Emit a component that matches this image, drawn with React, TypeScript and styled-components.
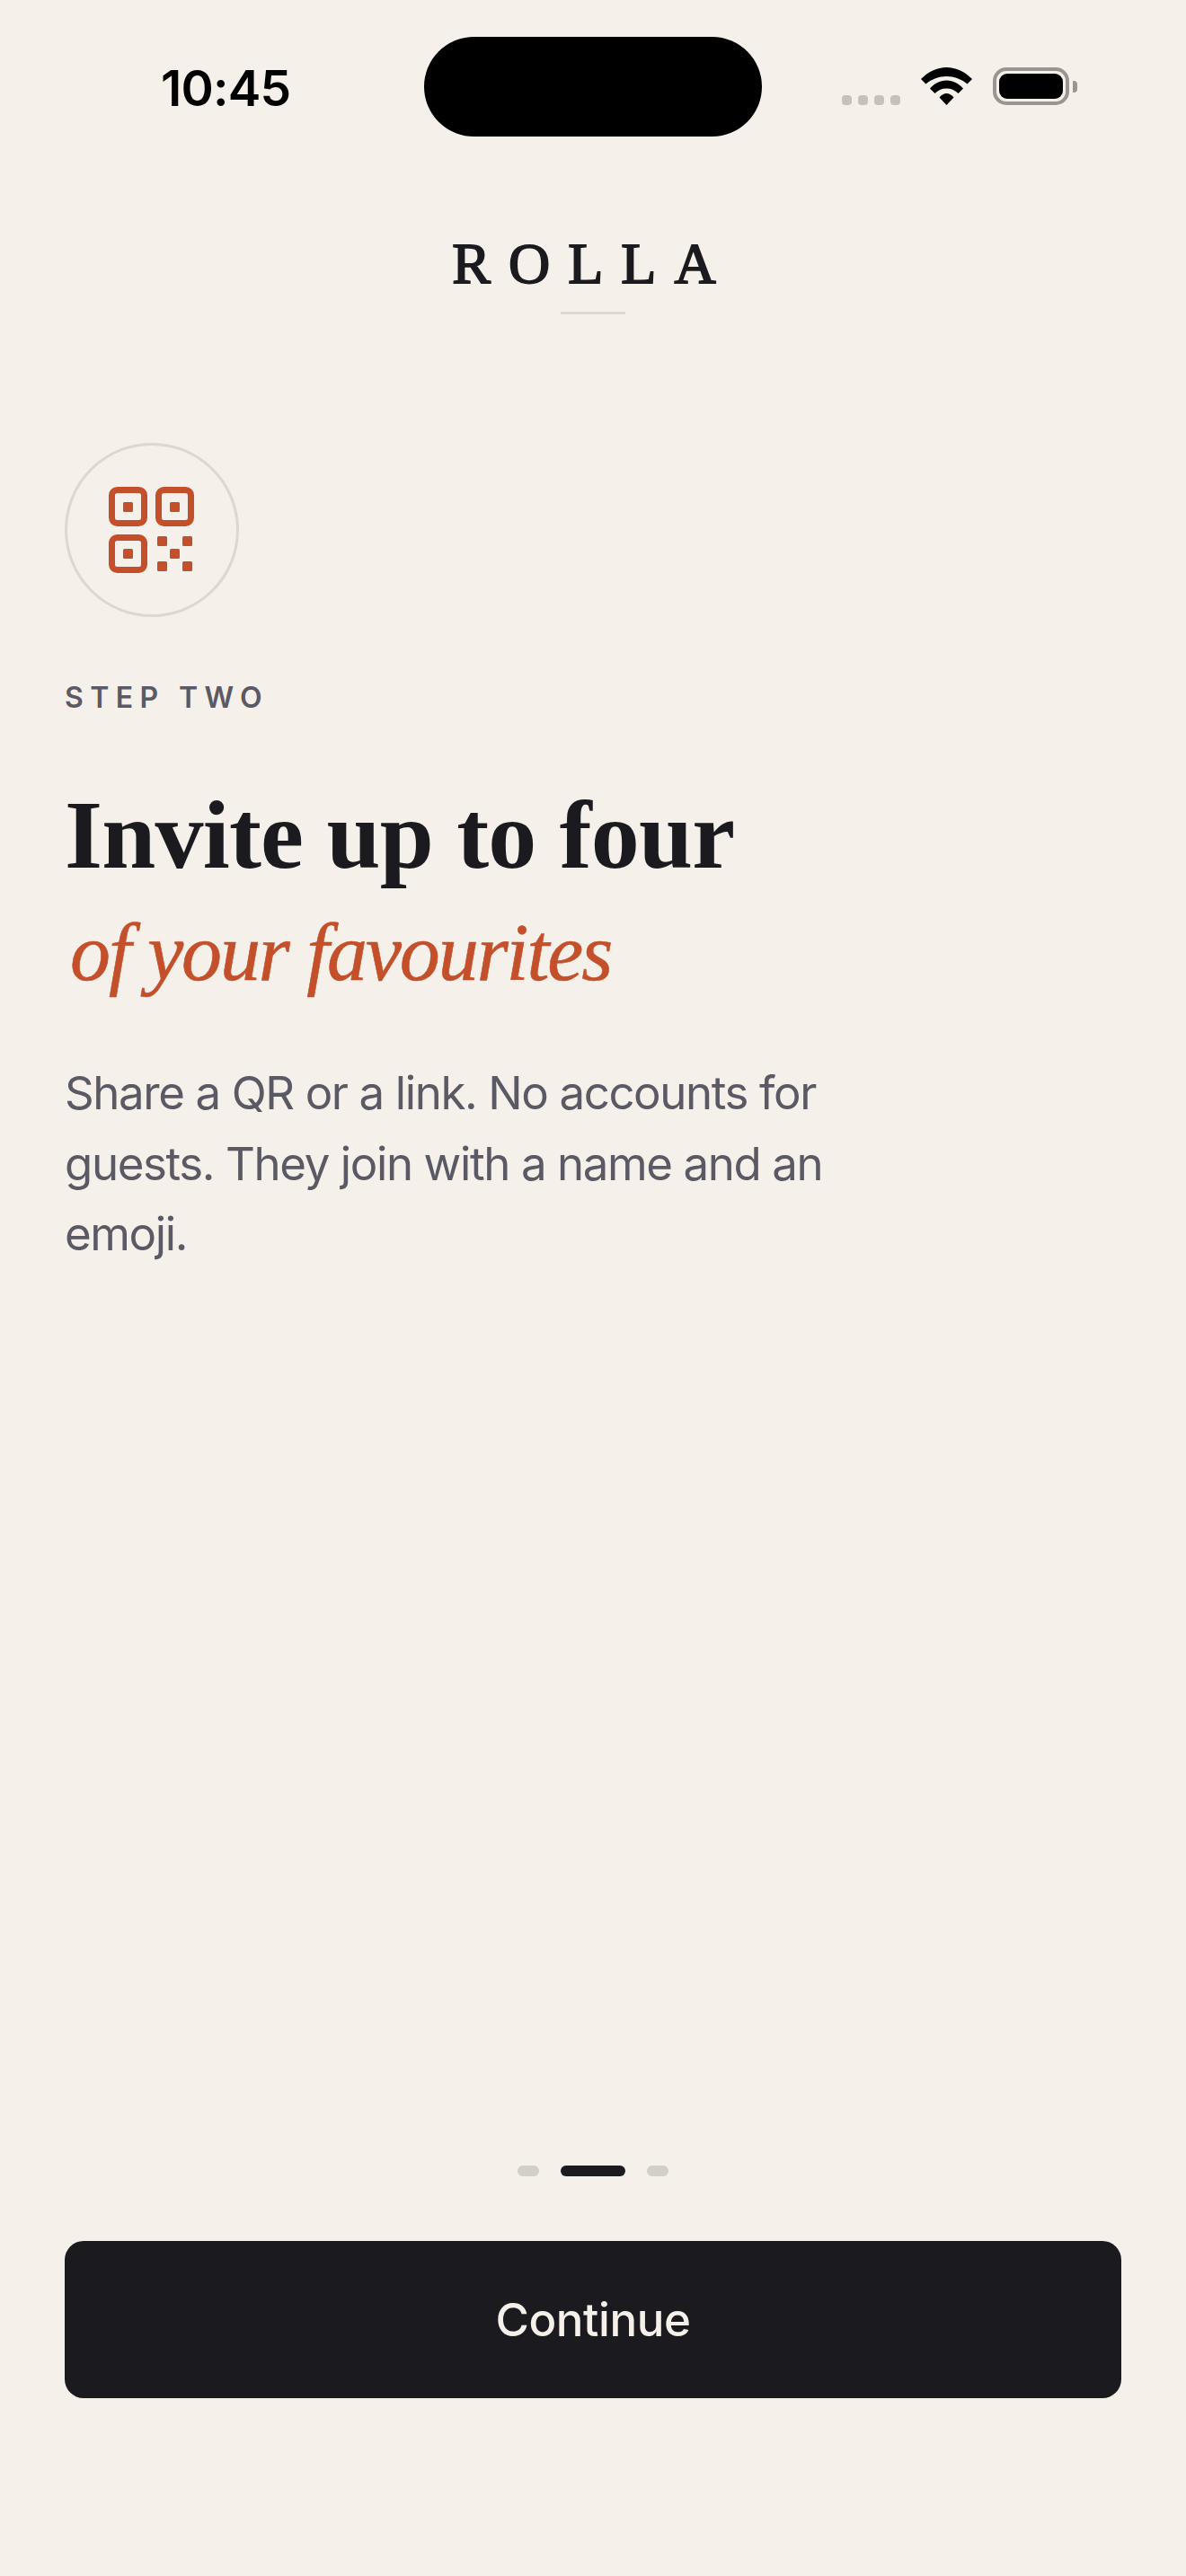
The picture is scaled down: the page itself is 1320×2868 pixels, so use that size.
import React from 'react';
import styled, { createGlobalStyle } from 'styled-components';

const colors = {
  paper: '#f5f0ea',
  ink: '#1b1b1f',
  rust: '#c4502b',
  slate: '#5b5a64',
  line: '#dcd8d1',
  dot: '#d2cec8',
};

const GlobalStyle = createGlobalStyle`
  html, body {
    margin: 0;
    padding: 0;
    background: ${colors.paper};
  }
  * {
    box-sizing: border-box;
  }
`;

const Screen = styled.div`
  display: flex;
  flex-direction: column;
  min-height: 2868px;
  background: ${colors.paper};
  font-family: Inter, "Noto Sans", sans-serif;
  color: ${colors.ink};
`;

const StatusBar = styled.div`
  display: grid;
  grid-template-columns: 472px 376px 472px;
  height: 152px;
  padding-top: 41px;
`;

const Clock = styled.div`
  padding: 25px 0 0 179px;
  font-size: 55px;
  line-height: 64px;
  font-weight: 600;
  letter-spacing: -0.8px;
  color: #000;
`;

const Island = styled.div`
  height: 111px;
  border-radius: 56px;
  background: #000;
`;

const StatusIcons = styled.div`
  display: flex;
  align-items: flex-end;
  height: 76px;
  padding-left: 89px;
`;

const SignalDots = styled.div`
  display: flex;
  gap: 7px;
  margin-right: 23px;
`;

const SignalDot = styled.span`
  width: 11px;
  height: 11px;
  border-radius: 4px;
  background: #c6c1ba;
`;

const Battery = styled.div`
  position: relative;
  width: 85px;
  height: 42px;
  margin-left: 23px;
  padding: 3px;
  border: 4px solid #9a958e;
  border-radius: 15px;

  &::before {
    content: '';
    display: block;
    height: 100%;
    border-radius: 9px;
    background: #000;
  }

  &::after {
    content: '';
    position: absolute;
    top: 11px;
    right: -13px;
    width: 5px;
    height: 13px;
    border-radius: 0 4px 4px 0;
    background: #9a958e;
  }
`;

const Header = styled.header`
  display: flex;
  flex-direction: column;
  align-items: center;
  padding-top: 106px;
`;

const Wordmark = styled.div`
  font-family: "Liberation Serif", serif;
  font-size: 64px;
  line-height: 72px;
  font-weight: 400;
  letter-spacing: 20px;
  -webkit-text-stroke: 1.8px ${colors.ink};
`;

const HeaderRule = styled.div`
  width: 72px;
  height: 3px;
  margin-top: 17px;
  background: ${colors.line};
`;

const Content = styled.main`
  flex: 1;
  padding: 143px 72px 0;
`;

const IconCircle = styled.div`
  display: flex;
  align-items: center;
  justify-content: center;
  width: 194px;
  height: 194px;
  border: 3px solid ${colors.line};
  border-radius: 50%;
`;

const StepLabel = styled.div`
  margin-top: 72px;
  font-size: 32px;
  line-height: 36px;
  font-weight: 600;
  letter-spacing: 7.4px;
  color: ${colors.slate};
`;

const Title = styled.h1`
  margin: 73px 0 0;
  font-family: "Liberation Serif", serif;
  font-size: 108px;
  line-height: 124px;
  font-weight: 700;
  letter-spacing: -0.8px;
`;

const TitleAccent = styled.div`
  margin: 16px 0 0 6px;
  font-family: "Liberation Serif", serif;
  font-size: 90px;
  line-height: 106px;
  font-style: italic;
  letter-spacing: -2.1px;
  -webkit-text-stroke: 0.6px ${colors.rust};
  color: ${colors.rust};
`;

const Lede = styled.p`
  width: 860px;
  margin: 64px 0 0;
  font-size: 51px;
  line-height: 78.5px;
  letter-spacing: -1.4px;
  color: ${colors.slate};
`;

const Footer = styled.footer`
  display: flex;
  flex-direction: column;
  align-items: center;
  padding: 0 72px 198px;
`;

const Pager = styled.div`
  display: flex;
  gap: 24px;
  margin-bottom: 72px;
`;

const PagerDot = styled.span<{ $active?: boolean }>`
  width: ${props => (props.$active ? '72px' : '24px')};
  height: 12px;
  border-radius: 6px;
  background: ${props => (props.$active ? colors.ink : colors.dot)};
`;

const ContinueButton = styled.button`
  width: 100%;
  height: 175px;
  border: 0;
  border-radius: 21px;
  background: ${colors.ink};
  color: #f5f0e9;
  font-family: Inter, "Noto Sans", sans-serif;
  font-size: 51px;
  font-weight: 500;
  letter-spacing: -0.4px;
`;

const WifiIcon = () => (
  <svg width="57" height="42" viewBox="0 0 57 42" fill="#000">
    <path d="M0 13C8 5 18 0 28.500 0S49 5 57 13L51.500 18.500C45 13 37 10 28.500 10S12 13 5.500 18.500Z" />
    <path d="M10 23.500C15 18 21 14.500 28.500 14.500S42 18 47 23.500L41.500 29C38 25.500 34 23.500 28.500 23.500S19 25.500 15.500 29Z" />
    <path d="M20.500 33.500C23 30.500 25.500 29 28.500 29S34 30.500 36.500 33.500L28.500 42Z" />
  </svg>
);

const QrIcon = () => (
  <svg width="96" height="96" viewBox="0 0 96 96" fill="#c4502b">
    <g fill="none" stroke="#c4502b" strokeWidth="7">
      <rect x="3.500" y="3.500" width="36" height="37" rx="6" />
      <rect x="55.500" y="3.500" width="36" height="37" rx="6" />
      <rect x="3.500" y="56.500" width="36" height="36" rx="6" />
    </g>
    <rect x="16" y="17" width="11" height="11" rx="1.500" />
    <rect x="68" y="17" width="11" height="11" rx="1.500" />
    <rect x="16" y="69" width="11" height="11" rx="1.500" />
    <rect x="54" y="55" width="11" height="11" rx="1.500" />
    <rect x="82" y="55" width="11" height="11" rx="1.500" />
    <rect x="68" y="69" width="11" height="11" rx="1.500" />
    <rect x="54" y="83" width="11" height="11" rx="1.500" />
    <rect x="82" y="83" width="11" height="11" rx="1.500" />
  </svg>
);

const App: React.FC = () => (
  <Screen>
    <GlobalStyle />
    <StatusBar>
      <Clock>10:45</Clock>
      <Island />
      <StatusIcons>
        <SignalDots>
          <SignalDot />
          <SignalDot />
          <SignalDot />
          <SignalDot />
        </SignalDots>
        <WifiIcon />
        <Battery />
      </StatusIcons>
    </StatusBar>
    <Header>
      <Wordmark>ROLLA</Wordmark>
      <HeaderRule />
    </Header>
    <Content>
      <IconCircle>
        <QrIcon />
      </IconCircle>
      <StepLabel>STEP TWO</StepLabel>
      <Title>Invite up to four</Title>
      <TitleAccent>of your favourites</TitleAccent>
      <Lede>Share a QR or a link. No accounts for guests. They join with a name and an emoji.</Lede>
    </Content>
    <Footer>
      <Pager>
        <PagerDot />
        <PagerDot $active />
        <PagerDot />
      </Pager>
      <ContinueButton>Continue</ContinueButton>
    </Footer>
  </Screen>
);

export default App;
